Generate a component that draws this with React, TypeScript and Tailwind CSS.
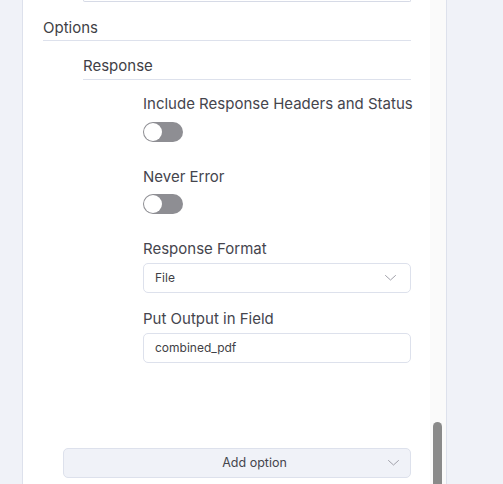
import React from "react";

const Chevron = () => (
  <svg width="11" height="6" viewBox="0 0 11 6" fill="none">
    <path d="M0.5 0.5 L5.5 5 L10.5 0.5" stroke="#a1a1aa" strokeWidth="1" strokeLinecap="round" strokeLinejoin="round" />
  </svg>
);

const Toggle = () => (
  <div className="relative w-[40px] h-[20px] rounded-full bg-[#8e8e93]">
    <div className="absolute left-[1px] top-[1px] w-[18px] h-[18px] rounded-full bg-white" />
  </div>
);

export default function App() {
  return (
    <div className="flex h-[484px] w-[503px] overflow-hidden bg-[#f0f2f8]" style={{ fontFamily: "Inter, 'Noto Sans', sans-serif" }}>
      <div className="w-[22px] shrink-0" />
      <div className="flex w-[425px] shrink-0 border-x border-[#dde1ec]">
        <div className="w-[407px] bg-white pl-[20px] pr-[19px]">
          <div className="ml-[40px] h-[2px] border-x border-b border-[#d6dae6] rounded-b-[4px]" />
          <div className="mt-[16px] text-[15px] leading-[20px] text-[#3f3f46]">Options</div>
          <div className="mt-[2px] border-b border-[#dde1ec]" />
          <div className="ml-[40px]">
            <div className="mt-[15px] text-[15px] leading-[20px] text-[#3f3f46]">Response</div>
            <div className="mt-[3px] border-b border-[#dde1ec]" />
            <div className="ml-[60px]">
              <div className="mt-[14px] text-[15px] leading-[20px] text-[#45454d] whitespace-nowrap">Include Response Headers and Status</div>
              <div className="mt-[8px]"><Toggle /></div>
              <div className="mt-[25px] text-[15px] leading-[20px] text-[#45454d]">Never Error</div>
              <div className="mt-[7px]"><Toggle /></div>
              <div className="mt-[25px] text-[15px] leading-[20px] text-[#45454d]">Response Format</div>
              <div className="mt-[4px] flex h-[30px] items-center justify-between rounded-[5px] border border-[#dde1ec] bg-white pl-[11px] pr-[14px] text-[12px] text-[#3f3f46]">
                <span>File</span>
                <Chevron />
              </div>
              <div className="mt-[16px] text-[15px] leading-[20px] text-[#45454d]">Put Output in Field</div>
              <div className="mt-[4px] flex h-[30px] items-center rounded-[5px] border border-[#dde1ec] bg-white pl-[11px] text-[12px] text-[#3f3f46]">
                combined_pdf
              </div>
            </div>
          </div>
          <div className="ml-[20px] mt-[85px] relative flex h-[30px] items-center justify-center rounded-[5px] border border-[#dde1ec] bg-[#f0f2f8] pl-[35px] text-[12.5px] text-[#45454d]">
            <span>Add option</span>
            <div className="absolute right-[11px] top-[11px] flex"><Chevron /></div>
          </div>
        </div>
        <div className="relative w-[16px] bg-[#fafafa]">
          <div className="absolute left-[3px] top-[422px] w-[9px] h-[70px] rounded-t-full bg-[#8a8a8a]" />
        </div>
      </div>
      <div className="flex-1" />
    </div>
  );
}
